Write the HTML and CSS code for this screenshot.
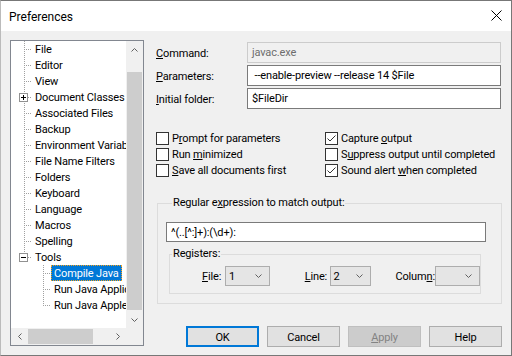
FILE: index.html
```html
<!DOCTYPE html>
<html>
<head>
    <meta charset="utf-8">
    <title>Preferences</title>
    <link rel="stylesheet" href="styles.css">
</head>
<body>
<div class="window">
    <div class="titlebar">
        <span class="title">Preferences</span>
        <svg class="close" width="11" height="11" viewBox="0 0 11 11"><path d="M0.5 0.5 L10.5 10.5 M10.5 0.5 L0.5 10.5" stroke="#000" stroke-width="1"/></svg>
    </div>
    <div class="client">
        <!-- left: tree of pages -->
        <div class="tree">
            <div class="tree-top">
                <div class="tree-items">
                    <div class="node"><span class="twig"></span><span class="label">File</span></div>
                    <div class="node"><span class="twig"></span><span class="label">Editor</span></div>
                    <div class="node"><span class="twig"></span><span class="label">View</span></div>
                    <div class="node"><span class="twig"><svg class="expander" width="9" height="9" viewBox="0 0 9 9"><rect x="0.5" y="0.5" width="8" height="8" fill="#fff" stroke="#919191"/><path d="M2 4.5 H7 M4.5 2 V7" stroke="#000"/></svg></span><span class="label">Document Classes</span></div>
                    <div class="node"><span class="twig"></span><span class="label">Associated Files</span></div>
                    <div class="node"><span class="twig"></span><span class="label">Backup</span></div>
                    <div class="node"><span class="twig"></span><span class="label">Environment Variables</span></div>
                    <div class="node"><span class="twig"></span><span class="label">File Name Filters</span></div>
                    <div class="node"><span class="twig"></span><span class="label">Folders</span></div>
                    <div class="node"><span class="twig"></span><span class="label">Keyboard</span></div>
                    <div class="node"><span class="twig"></span><span class="label">Language</span></div>
                    <div class="node"><span class="twig"></span><span class="label">Macros</span></div>
                    <div class="node"><span class="twig"></span><span class="label">Spelling</span></div>
                    <div class="node"><span class="twig last"><svg class="expander" width="9" height="9" viewBox="0 0 9 9"><rect x="0.5" y="0.5" width="8" height="8" fill="#fff" stroke="#919191"/><path d="M2 4.5 H7" stroke="#000"/></svg></span><span class="label">Tools</span></div>
                    <div class="node child"><span class="twig"></span><span class="label selected">Compile Java</span></div>
                    <div class="node child"><span class="twig"></span><span class="label">Run Java Application</span></div>
                    <div class="node child"><span class="twig last"></span><span class="label">Run Java Applet</span></div>
                </div>
                <div class="vscroll">
                    <div class="sbtn"><svg width="7" height="4" viewBox="0 0 7 4"><path d="M0.5 3.5 L3.5 0.5 L6.5 3.5" fill="none" stroke="#606060"/></svg></div>
                    <div class="track"><div class="thumb"></div></div>
                    <div class="sbtn"><svg width="7" height="4" viewBox="0 0 7 4"><path d="M0.5 0.5 L3.5 3.5 L6.5 0.5" fill="none" stroke="#606060"/></svg></div>
                </div>
            </div>
            <div class="hscroll-row">
                <div class="hscroll">
                    <div class="sbtn"><svg width="4" height="7" viewBox="0 0 4 7"><path d="M3.5 0.5 L0.5 3.5 L3.5 6.5" fill="none" stroke="#606060"/></svg></div>
                    <div class="track"><div class="thumb"></div></div>
                    <div class="sbtn"><svg width="4" height="7" viewBox="0 0 4 7"><path d="M0.5 0.5 L3.5 3.5 L0.5 6.5" fill="none" stroke="#606060"/></svg></div>
                </div>
                <div class="corner"></div>
            </div>
        </div>

        <!-- right: tool settings -->
        <div class="pane">
            <div class="fields">
                <div class="field"><span class="flabel"><u>C</u>ommand:</span><span class="edit disabled">javac.exe</span></div>
                <div class="field"><span class="flabel"><u>P</u>arameters:</span><span class="edit">&nbsp;--enable-preview --release 14 $File</span></div>
                <div class="field"><span class="flabel"><u>I</u>nitial folder:</span><span class="edit">$FileDir</span></div>
            </div>
            <div class="checks">
                <div class="check"><span class="box"></span><span>P<u>r</u>ompt for parameters</span></div>
                <div class="check"><span class="box"><svg width="11" height="11" viewBox="0 0 11 11"><path d="M1.5 5.5 L4 8 L9.5 2.5" fill="none" stroke="#333"/></svg></span><span>Capture <u>o</u>utput</span></div>
                <div class="check"><span class="box"></span><span>Run <u>m</u>inimized</span></div>
                <div class="check"><span class="box"></span><span>S<u>u</u>ppress output until completed</span></div>
                <div class="check"><span class="box"></span><span><u>S</u>ave all documents first</span></div>
                <div class="check"><span class="box"><svg width="11" height="11" viewBox="0 0 11 11"><path d="M1.5 5.5 L4 8 L9.5 2.5" fill="none" stroke="#333"/></svg></span><span>Sound alert <u>w</u>hen completed</span></div>
            </div>
            <fieldset class="group">
                <legend>Regular e<u>x</u>pression to match output:</legend>
                <div class="edit regex">^(..[^:]+):(\d+):</div>
                <fieldset class="group registers">
                    <legend>Registers:</legend>
                    <div class="regrow">
                        <span class="rlabel file"><u>F</u>ile:</span>
                        <span class="combo w45">1<svg width="7" height="4" viewBox="0 0 7 4"><path d="M0.5 0.5 L3.5 3.5 L6.5 0.5" fill="none" stroke="#606060"/></svg></span>
                        <span class="rlabel line"><u>L</u>ine:</span>
                        <span class="combo w42">2<svg width="7" height="4" viewBox="0 0 7 4"><path d="M0.5 0.5 L3.5 3.5 L6.5 0.5" fill="none" stroke="#606060"/></svg></span>
                        <span class="rlabel column">Colum<u>n</u>:</span>
                        <span class="combo w45"><svg width="7" height="4" viewBox="0 0 7 4"><path d="M0.5 0.5 L3.5 3.5 L6.5 0.5" fill="none" stroke="#606060"/></svg></span>
                    </div>
                </fieldset>
            </fieldset>
            <div class="buttons">
                <span class="button default">OK</span>
                <span class="button">Cancel</span>
                <span class="button off"><u>A</u>pply</span>
                <span class="button">Help</span>
            </div>
        </div>
    </div>
</div>
</body>
</html>
```

FILE: styles.css
```css
body {
    margin: 0;
    font-family: Roboto, "Noto Sans", sans-serif;
    font-size: 11px;
    letter-spacing: -0.15px;
    color: #000;
}
.window {
    width: 512px;
    height: 356px;
    box-sizing: border-box;
    border: 1px solid #777;
    border-left-color: #bbb;
    display: flex;
    flex-direction: column;
}
.titlebar {
    height: 30px;
    box-sizing: border-box;
    background: #fff;
    display: flex;
    align-items: center;
    justify-content: space-between;
    padding: 1px 9px 0 8px;
    font-size: 12px;
    letter-spacing: 0;
}
.close { margin-top: -2px; }

.client {
    flex: 1;
    background: #f0f0f0;
    display: flex;
    padding: 9px 9px 0 9px;
}

/* tree */
.tree {
    width: 134px;
    height: 306px;
    box-sizing: border-box;
    border: 1px solid #828790;
    display: flex;
    flex-direction: column;
}
.tree-top {
    flex: 1;
    display: flex;
    min-height: 0;
}
.tree-items {
    width: 115px;
    background: #fff;
    overflow: hidden;
}
.node {
    height: 16px;
    display: flex;
    align-items: center;
    white-space: nowrap;
}
.twig {
    position: relative;
    flex: none;
    width: 8px;
    height: 16px;
    margin-left: 13px;
    background:
        repeating-linear-gradient(to bottom, #a0a0a0 0 1px, transparent 1px 2px) 0 0 / 1px 100% no-repeat,
        repeating-linear-gradient(to right, #a0a0a0 0 1px, transparent 1px 2px) 0 8px / 100% 1px no-repeat;
}
.twig.last {
    background:
        repeating-linear-gradient(to bottom, #a0a0a0 0 1px, transparent 1px 2px) 0 0 / 1px 8px no-repeat,
        repeating-linear-gradient(to right, #a0a0a0 0 1px, transparent 1px 2px) 0 8px / 100% 1px no-repeat;
}
.child .twig { margin-left: 32px; }
.expander {
    position: absolute;
    left: -5px;
    top: 4px;
}
.label {
    padding: 1px 2px 0;
    border: 1px solid transparent;
    line-height: 13px;
}
.label.selected {
    background: #0078d7;
    color: #fff;
    border: 1px dotted #f7a21b;
}

/* scrollbars */
.vscroll {
    width: 17px;
    background: #f0f0f0;
    display: flex;
    flex-direction: column;
}
.sbtn {
    width: 17px;
    height: 17px;
    flex: none;
    display: flex;
    align-items: center;
    justify-content: center;
}
.vscroll .track { flex: 1; padding: 14px 1px 1px; }
.vscroll .thumb { height: 100%; background: #cdcdcd; }
.hscroll-row { height: 17px; display: flex; }
.hscroll {
    width: 115px;
    display: flex;
    background: #f0f0f0;
}
.hscroll .track { flex: 1; padding: 1px 0; }
.hscroll .thumb { width: 65px; height: 100%; background: #cdcdcd; }
.corner { flex: 1; background: #f0f0f0; }

/* right pane */
.pane {
    margin-left: 12px;
    flex: 1;
    display: flex;
    flex-direction: column;
}
.fields {
    margin-top: 2px;
    display: flex;
    flex-direction: column;
    gap: 2px;
}
.field {
    display: flex;
    align-items: center;
    height: 21px;
}
.flabel { width: 91px; padding-top: 1px; }
.edit {
    box-sizing: border-box;
    width: 254px;
    height: 21px;
    border: 1px solid #7a7a7a;
    background: #fff;
    padding: 1px 4px 0;
    line-height: 18px;
    white-space: nowrap;
}
.edit.disabled {
    background: #f0f0f0;
    border-color: #ccc;
    color: #6d6d6d;
}
.checks {
    margin-top: 21px;
    display: grid;
    grid-template-columns: 169px 1fr;
}
.check {
    height: 16px;
    display: flex;
    align-items: center;
    white-space: nowrap;
}
.box {
    box-sizing: border-box;
    width: 13px;
    height: 13px;
    border: 1px solid #333;
    background: #fff;
    margin-right: 3px;
    display: flex;
}

.group {
    margin: 17px 0 0 1px;
    width: 345px;
    box-sizing: border-box;
    border: 1px solid #dcdcdc;
    padding: 11px 8px 9px;
    min-width: 0;
}
.group legend {
    padding: 0 1px;
    margin-left: 6px;
    line-height: 16px;
}
.edit.regex {
    width: 320px;
    height: 20px;
    line-height: 17px;
}
.group.registers {
    margin: 4px 0 0 3px;
    width: 312px;
    padding: 4px 0 7px;
}
.registers legend { margin-left: 2px; }
.regrow {
    display: flex;
    align-items: center;
    height: 20px;
}
.rlabel { padding-top: 1px; }
.rlabel.file { margin-left: 32px; width: 23px; }
.rlabel.line { margin-left: 35px; width: 25px; }
.rlabel.column { margin-left: 24px; width: 40px; }
.combo {
    box-sizing: border-box;
    height: 20px;
    border: 1px solid #adadad;
    background: #e5e5e5;
    display: flex;
    align-items: center;
    justify-content: space-between;
    padding: 1px 7px 0 3px;
}
.combo svg { margin-left: auto; margin-top: -1px; }
.w45 { width: 45px; }
.w42 { width: 42px; }

.buttons {
    margin-top: 22px;
    display: flex;
    justify-content: flex-end;
    gap: 8px;
}
.button {
    box-sizing: border-box;
    width: 73px;
    height: 21px;
    padding-top: 1px;
    border: 1px solid #adadad;
    background: #e1e1e1;
    display: flex;
    align-items: center;
    justify-content: center;
}
.button.default { border: 2px solid #0078d7; }
.button.off {
    background: #cccccc;
    border-color: #bfbfbf;
    color: #838383;
}
```
